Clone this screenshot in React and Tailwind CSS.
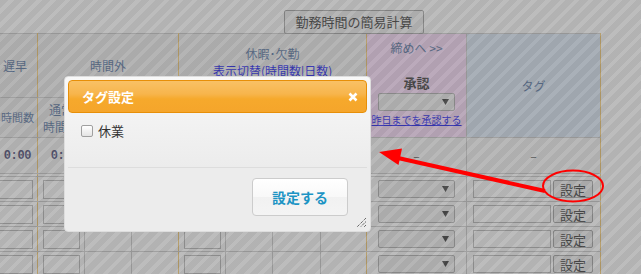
import React from "react";

const jp = "font-['Noto_Sans_CJK_JP','Noto_Sans',sans-serif]";
const cell = "border border-[#c6c6c6] p-0";
const tan = "border-r-[#f2c25e]";
const head = "text-[#446699] font-normal";

function TextBox() {
  return <div className="ml-auto mr-[4px] w-[37px] h-[19px] border border-[#b0b0b0] bg-white" />;
}

function Select() {
  return (
    <div className="w-[77px] h-[18px] rounded-[2px] border border-[#a8a8a8] bg-[#f0f0f0] flex items-center justify-end pr-[5px]">
      <svg width="7" height="6" viewBox="0 0 7 6">
        <polygon points="0,0 7,0 3.5,6" fill="#222" />
      </svg>
    </div>
  );
}

function DataRow() {
  return (
    <tr className="h-[25px] bg-white">
      <td className={`${cell} ${tan}`}>
        <TextBox />
      </td>
      <td className={cell}>
        <TextBox />
      </td>
      <td className={cell} />
      <td className={`${cell} ${tan}`} />
      <td className={cell}>
        <TextBox />
      </td>
      <td className={cell} />
      <td className={cell} />
      <td className={`${cell} ${tan}`} />
      <td className={cell}>
        <div className="flex justify-center">
          <Select />
        </div>
      </td>
      <td className={`${cell} ${tan}`}>
        <div className="flex items-center pl-[6px] gap-[2px]">
          <div className="w-[78px] h-[18px] border border-[#b0b0b0] bg-white" />
          <button className="w-[40px] h-[18px] rounded-[2px] border border-[#999999] bg-[#ececec] text-[13px] leading-none text-[#222]">
            設定
          </button>
        </div>
      </td>
    </tr>
  );
}

function TimeCell({ last, value }) {
  return (
    <td className={`${cell} ${last ? tan : ""} text-right pr-[6px] font-['Liberation_Mono',monospace] font-bold text-[12px] tracking-[-0.4px] text-[#333366]`}>
      {value}
    </td>
  );
}

function TagDialog() {
  return (
    <div className="absolute left-[64px] top-[76px] w-[307px] h-[156px] rounded-[4px] border border-[#dddddd] bg-[linear-gradient(#f8f8f8,#ececec_90px)] p-[3px] flex flex-col">
      <div className="h-[33px] shrink-0 rounded-[4px] border border-[#e78f08] bg-[linear-gradient(180deg,#f9c166_0%,#f7b54c_42%,#f6a92c_58%,#f5a52b_100%)] flex items-center justify-between pl-[13px] pr-[8px]">
        <span className="text-white font-bold text-[13px] leading-none">タグ設定</span>
        <svg width="10" height="10" viewBox="0 0 10 10">
          <path d="M1.5 1.5 L8.5 8.5 M8.5 1.5 L1.5 8.5" stroke="#ffffff" strokeWidth="2.6" />
        </svg>
      </div>
      <div className="h-[54px] shrink-0 pl-[13px] pt-[8px]">
        <label className="flex items-center gap-[5px] text-[13px] text-[#333333]">
          <span className="w-[12px] h-[12px] rounded-[2px] border border-[#a0a0a0] bg-[linear-gradient(#ffffff,#e4e4e4)]" />
          休業
        </label>
      </div>
      <div className="flex-1 border-t border-[#dddddd] flex justify-end items-start pt-[10px] pr-[19px]">
        <button className="w-[96px] h-[38px] rounded-[4px] border border-[#cccccc] bg-[linear-gradient(#ffffff,#f8f8f8_50%,#f1f1f1_51%,#f4f4f4)] text-[14px] font-bold text-[#1c94c4]">
          設定する
        </button>
      </div>
      <svg className="absolute right-[3px] bottom-[3px]" width="11" height="11" viewBox="0 0 11 11">
        <path d="M10 1 L1 10 M10 4.5 L4.5 10 M10 8 L8 10" stroke="#333" strokeWidth="1" strokeDasharray="1 1" />
      </svg>
    </div>
  );
}

export default function App() {
  return (
    <div className={`relative w-[641px] h-[274px] overflow-hidden bg-white ${jp}`}>
      <div className="pt-[8px] pl-[284px] h-[33px]">
        <button className="w-[140px] h-[24px] rounded-[2px] border border-[#999999] bg-[#f2f2f2] text-[13px] leading-none text-[#222]">
          勤務時間の簡易計算
        </button>
      </div>

      <table className="ml-[-8px] w-[608px] table-fixed border-collapse text-center">
        <colgroup>
          <col className="w-[45px]" />
          <col className="w-[47px]" />
          <col className="w-[47px]" />
          <col className="w-[47px]" />
          <col className="w-[47px]" />
          <col className="w-[47px]" />
          <col className="w-[48px]" />
          <col className="w-[46px]" />
          <col className="w-[100px]" />
          <col className="w-[134px]" />
        </colgroup>
        <thead>
          <tr className="h-[64px] bg-[#efefef] text-[12px]">
            <th className={`${cell} ${tan} ${head}`}>遅早</th>
            <th colSpan={3} className={`${cell} ${tan} ${head}`}>
              時間外
            </th>
            <th colSpan={4} className={`${cell} ${tan} ${head} align-top pt-[11px]`}>
              <div className="leading-[17px]">休暇･欠勤</div>
              <a className="block text-[12px] leading-[17px] text-[#0000ee] underline">
                表示切替(時間数|日数)
              </a>
            </th>
            <th rowSpan={2} className={`${cell} bg-[#fcdafc] align-top font-normal`}>
              <div className="flex flex-col items-center pt-[6px]">
                <span className="text-[12px] leading-[16px] text-[#446699]">締めへ &gt;&gt;</span>
                <span className="mt-[19px] text-[13px] font-bold leading-[16px] text-[#222]">承認</span>
                <div className="mt-[2px]">
                  <Select />
                </div>
                <a className="mt-[3px] text-[10px] leading-[12px] text-[#0000ee] underline">
                  昨日までを承認する
                </a>
              </div>
            </th>
            <th rowSpan={2} className={`${cell} ${tan} bg-[#d8e6f6] ${head}`}>
              タグ
            </th>
          </tr>
          <tr className="h-[40px] bg-[#efefef] text-[12px] leading-[17px]">
            <th className={`${cell} ${tan} ${head} pl-[5px] text-[11px]`}>時間数</th>
            <th className={`${cell} ${head}`}>
              通常
              <br />
              時間数
            </th>
            <th className={cell} />
            <th className={`${cell} ${tan}`} />
            <th className={cell} />
            <th className={cell} />
            <th className={cell} />
            <th className={`${cell} ${tan}`} />
          </tr>
        </thead>
        <tbody>
          <tr className="h-[36px] bg-[#f7f7f7]">
            <TimeCell last value="0:00" />
            <TimeCell value="0:00" />
            <TimeCell />
            <TimeCell last />
            <TimeCell />
            <TimeCell />
            <TimeCell />
            <TimeCell last />
            <td className={`${cell} text-[12px] text-[#333]`}>–</td>
            <td className={`${cell} ${tan} text-[12px] text-[#333]`}>–</td>
          </tr>
          <tr className="h-[3px]">
            <td className={`${cell} ${tan}`} />
            <td className={cell} />
            <td className={cell} />
            <td className={`${cell} ${tan}`} />
            <td className={cell} />
            <td className={cell} />
            <td className={cell} />
            <td className={`${cell} ${tan}`} />
            <td className={cell} />
            <td className={`${cell} ${tan}`} />
          </tr>
          <DataRow />
          <DataRow />
          <DataRow />
          <DataRow />
        </tbody>
      </table>

      <div className="absolute inset-0 opacity-50 bg-[image:repeating-linear-gradient(135deg,#666666_0px,#666666_6px,#7a7a7a_6px,#7a7a7a_10px)]" />

      <TagDialog />

      <svg className="absolute inset-0 pointer-events-none" width="641" height="274" viewBox="0 0 641 274">
        <ellipse cx="573" cy="186" rx="30" ry="15.5" fill="none" stroke="#ff0000" strokeWidth="2" />
        <line x1="545" y1="191" x2="398" y2="158" stroke="#ff0000" strokeWidth="4" />
        <polygon points="379,152 402,148.5 398.5,165" fill="#ff0000" />
      </svg>
    </div>
  );
}
